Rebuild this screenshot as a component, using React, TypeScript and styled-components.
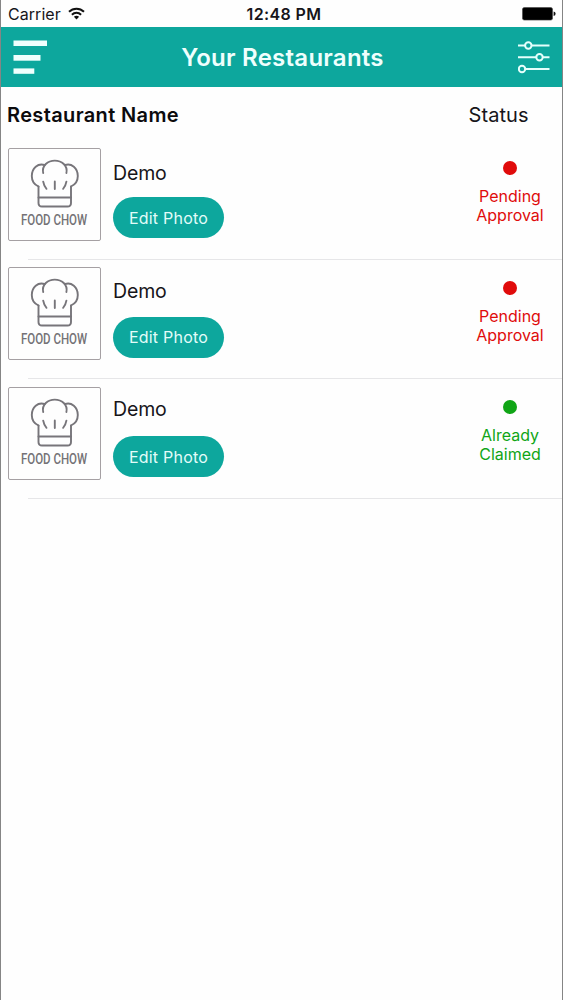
import React from "react";
import styled, { createGlobalStyle } from "styled-components";

const GlobalStyle = createGlobalStyle`
  * { box-sizing: border-box; }
  body { margin: 0; background: #fefefe; font-family: Inter, "Liberation Sans", sans-serif; color: #17151a; }
`;

const Screen = styled.main`
  height: 1000px;
  display: flex;
  flex-direction: column;
  border-left: 1px solid #858585;
  border-right: 1px solid #858585;
  overflow: hidden;
`;

const StatusBar = styled.header`
  height: 27px;
  flex: none;
  display: grid;
  grid-template-columns: 1fr auto 1fr;
  align-items: center;
  padding: 1px 6px 0 7px;
  font-size: 16px;
  line-height: 20px;
`;

const Carrier = styled.div`
  display: flex;
  align-items: center;
  gap: 7px;
  letter-spacing: 0.05px;
  svg { margin-top: -2px; }
`;

const Clock = styled.div`
  font-weight: 600;
  letter-spacing: 0.38px;
  margin-left: 4px;
`;

const Battery = styled.div`
  justify-self: end;
  height: 14px;
  display: flex;
  svg { display: block; }
`;

const NavBar = styled.nav`
  height: 60px;
  flex: none;
  display: grid;
  grid-template-columns: 60px 1fr 60px;
  align-items: center;
  padding: 0 12px 0 12px;
  background: #0da79d;
  svg { display: block; }
`;

const Title = styled.h1`
  margin: 0 0 0 2px;
  text-align: center;
  color: #effffd;
  font-size: 24px;
  line-height: 30px;
  font-weight: 600;
  letter-spacing: 0.24px;
  padding-top: 2px;
`;

const IconButton = styled.button<{ $end?: boolean }>`
  border: 0;
  padding: 0;
  background: none;
  justify-self: ${(p) => (p.$end ? "end" : "start")};
`;

const ListHeader = styled.div`
  height: 53px;
  flex: none;
  display: flex;
  justify-content: space-between;
  padding: 16px 33.5px 0 6px;
  font-size: 20px;
  line-height: 25px;
`;

const NameHeading = styled.span`
  font-weight: 600;
  letter-spacing: 0.36px;
  color: #0c0b0d;
`;

const StatusHeading = styled.span`
  letter-spacing: 0.05px;
`;

const Row = styled.article`
  height: 119.5px;
  flex: none;
  display: grid;
  grid-template-columns: 93px 1fr 104px;
  column-gap: 12px;
  padding: 7.9px 0 0 7px;
  background: linear-gradient(#e6e6e8, #e6e6e8) 27px 100% / 100% 1px no-repeat;
`;

const Photo = styled.div`
  width: 93px;
  height: 93px;
  border: 1px solid #a5a0a3;
  border-radius: 2px;
  svg { display: block; }
`;

const Details = styled.div<{ $lead: number }>`
  height: 93px;
  display: flex;
  flex-direction: column;
  align-items: flex-start;
  padding: ${(p) => p.$lead}px 0 2.8px;
`;

const Name = styled.div`
  font-size: 19.5px;
  line-height: 24px;
  letter-spacing: -0.15px;
`;

const EditButton = styled.button`
  margin-top: auto;
  width: 111px;
  height: 41px;
  flex: none;
  border: 0;
  border-radius: 21px;
  padding: 0;
  background: #0da79d;
  color: #e2fcf9;
  font: 16px/20px Inter, "Liberation Sans", sans-serif;
  letter-spacing: 0.22px;
`;

const Status = styled.div<{ $color: string }>`
  display: flex;
  flex-direction: column;
  align-items: center;
  padding-top: 13.5px;
  color: ${(p) => p.$color};
  text-align: center;
  font-size: 16px;
  line-height: 19px;
`;

const Dot = styled.i<{ $color: string }>`
  width: 14px;
  height: 14px;
  flex: none;
  border-radius: 50%;
  margin-bottom: 11.7px;
  background: ${(p) => p.$color};
`;

const WifiIcon = () => (
  <svg width="17" height="13" viewBox="0 0 17 13" fill="none" stroke="#111" strokeWidth="2">
    <path d="M1 4.8C5.2.6 11.8.6 16 4.8" />
    <path d="M3.9 7.7C6.5 5.2 10.5 5.2 13.1 7.7" />
    <path d="M5.9 9.7C7.4 8.3 9.6 8.3 11.1 9.7L8.5 12.4Z" fill="#111" stroke="none" />
  </svg>
);

const BatteryIcon = () => (
  <svg width="34" height="14" viewBox="0 0 34 14">
    <rect x=".5" y=".5" width="30" height="12.6" rx="1.8" fill="#000" stroke="#444" strokeWidth=".6" />
    <path d="M31.6 4.6Q33.6 4.9 33.6 6.8T31.6 9Z" fill="#111" />
  </svg>
);

const MenuIcon = () => (
  <svg width="34" height="34" viewBox="0 0 34 34" fill="#effffd">
    <rect x="0.5" y="0.5" width="33.5" height="5.5" />
    <rect x="0.5" y="15" width="27" height="5.7" />
    <rect x="0.5" y="28.4" width="20.8" height="5.4" />
  </svg>
);

const FilterIcon = () => (
  <svg width="32" height="34" viewBox="0 0 32 34" fill="none" stroke="#e5fffc" strokeWidth="2">
    <path d="M0 5.5H7M14 5.5H31.5M0 17.2H18M25 17.2H31.5M7.5 29H31.5" />
    <circle cx="10.3" cy="5.5" r="3.2" />
    <circle cx="21.5" cy="17.2" r="3.2" />
    <circle cx="4" cy="29" r="3.2" />
  </svg>
);

const ChefHat = () => (
  <svg width="91" height="91" viewBox="0 0 91 91">
    <g fill="none" stroke="#77757a" strokeWidth="1.9" strokeLinecap="round" strokeLinejoin="round">
      <path d="M29.5 37.5V54Q29.5 57.5 33 57.5H58.5Q62 57.5 62 54V37.5" />
      <path d="M29.5 48.5H62" />
      <path d="M29.5 37.5C25 35.5 22.8 31.5 22.8 27C22.8 19 29 14 35.5 16M62 37.5C66.5 35.5 68.8 31.5 68.8 27C68.8 19 62.5 14 56.1 16" />
      <path d="M34.2 24C32.5 16.5 39 11.6 45.8 11.6S59 16.5 57.4 24" />
      <path d="M45.8 32.5V40M34.2 32.7Q35 37.3 37.5 39.8M57.4 32.7Q56.6 37.3 54.1 39.8" />
    </g>
    <text
      transform="translate(45 75.7) scale(.81 1)"
      textAnchor="middle"
      fontFamily="Roboto, sans-serif"
      fontSize="14.2"
      fontWeight="500"
      fill="#747276"
    >
      FOOD CHOW
    </text>
  </svg>
);

const PENDING = { color: "#e00b0b", lines: ["Pending", "Approval"] };
const CLAIMED = { color: "#10a516", lines: ["Already", "Claimed"] };

const restaurants = [
  { name: "Demo", status: PENDING, lead: 13.4 },
  { name: "Demo", status: PENDING, lead: 11.4 },
  { name: "Demo", status: CLAIMED, lead: 9.7 },
];

export default function App() {
  return (
    <Screen>
      <GlobalStyle />
      <StatusBar>
        <Carrier>
          Carrier <WifiIcon />
        </Carrier>
        <Clock>12:48 PM</Clock>
        <Battery>
          <BatteryIcon />
        </Battery>
      </StatusBar>
      <NavBar>
        <IconButton aria-label="Menu">
          <MenuIcon />
        </IconButton>
        <Title>Your Restaurants</Title>
        <IconButton $end aria-label="Filters">
          <FilterIcon />
        </IconButton>
      </NavBar>
      <ListHeader>
        <NameHeading>Restaurant Name</NameHeading>
        <StatusHeading>Status</StatusHeading>
      </ListHeader>
      {restaurants.map((r, i) => (
        <Row key={i}>
          <Photo>
            <ChefHat />
          </Photo>
          <Details $lead={r.lead}>
            <Name>{r.name}</Name>
            <EditButton>Edit Photo</EditButton>
          </Details>
          <Status $color={r.status.color}>
            <Dot $color={r.status.color} />
            {r.status.lines.map((line) => (
              <span key={line}>{line}</span>
            ))}
          </Status>
        </Row>
      ))}
    </Screen>
  );
}
